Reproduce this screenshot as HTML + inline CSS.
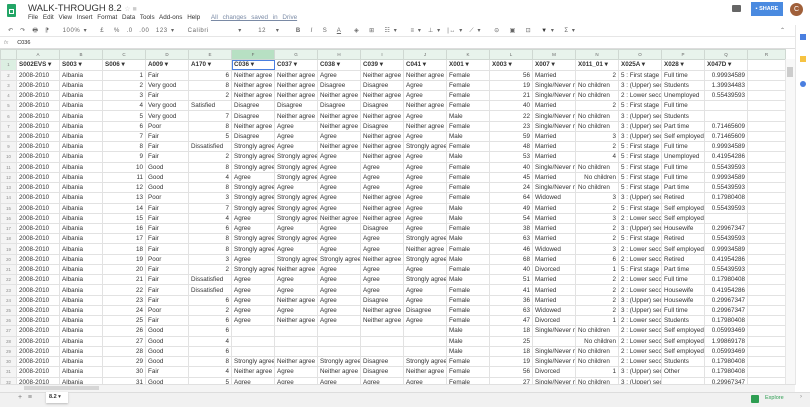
<!DOCTYPE html><html><head><meta charset="utf-8"><style>
*{margin:0;padding:0;box-sizing:border-box}
body{width:810px;height:407px;overflow:hidden;background:#fff;font-family:"Liberation Sans",sans-serif;color:#222;position:relative}
.a{position:absolute}
.t{font-size:9.5px;color:#333;left:28px;top:3px}
.m{font-size:6.3px;color:#333;left:28px;top:14px;word-spacing:3px}
.m span{color:#7a8aa5;text-decoration:underline;margin-left:6px}
.tb{top:25px;left:0;width:795px;height:12px;font-size:6px;color:#666;white-space:pre;padding-left:8px;line-height:12px;border-bottom:1px solid #e6e6e6;letter-spacing:0.6px;word-spacing:1px}
.fb{top:38px;left:0;width:795px;height:11px;font-size:5.5px;line-height:11px;border-bottom:1px solid #ddd}
table{position:absolute;left:0;top:49px;border-collapse:collapse;table-layout:fixed;width:785px}
td{border:1px solid #e2e2e2;font-size:6.3px;height:10.24px;line-height:9px;padding:0 2px;white-space:nowrap;overflow:hidden;color:#333}
td.n{text-align:right}
tr.h td{background:#e8f3ec;text-align:center;font-size:4.5px;color:#666;height:9px;border-color:#cfd8d2}
tr.h td.s{background:#b7e0c3}
td.rh{background:#f4f4f4;text-align:center;font-size:4.3px;color:#888;padding:0}
tr.f td{font-weight:bold;height:10.5px}
tr.f td.rh{background:#dcefe2;font-weight:normal}
.sel{outline:1.5px solid #4a7fe0;outline-offset:-1px}
</style></head><body>
<div class="a" style="left:7px;top:4px;width:9px;height:13px;background:#23a566;border-radius:1px"></div>
<div class="a" style="left:9px;top:9px;width:5px;height:5px;border:1px solid #fff"></div>
<div class="a t">WALK-THROUGH 8.2 <span style="color:#ccc;font-size:7px">☆ ■</span></div>
<div class="a m">File Edit View Insert Format Data Tools Add-ons Help <span>All changes saved in Drive</span></div>
<div class="a" style="left:732px;top:5px;width:9px;height:7px;background:#666;border-radius:1px"></div>
<div class="a" style="left:751px;top:2px;width:32px;height:14px;background:#4a8ae0;color:#fff;font-size:5.5px;line-height:14px;text-align:center;font-weight:bold">▪ SHARE</div>
<div class="a" style="left:790px;top:3px;width:13px;height:13px;border-radius:50%;background:#a0603a;color:#fff;font-size:7px;text-align:center;line-height:13px">C</div>
<div class="a tb">↶  ↷  🖶  ⁋    100% ▾    £   %  .0  .00  123 ▾    Calibri         ▾     12   ▾     <b>B</b>   <i>I</i>   S   <u>A</u>    ◈   ⊞   ☷ ▾    ≡ ▾  ⊥ ▾  |↔ ▾  ⟋ ▾    ⊝   ▣   ⊡   <b style="color:#333">▼</b> ▾   Σ ▾</div>
<div class="a" style="left:780px;top:27px;font-size:6px;color:#666">⌃</div>
<div class="a fb"><span style="color:#aaa;font-style:italic;margin-left:4px">fx</span><span style="margin-left:9px">C036</span></div>
<div class="a" style="left:795px;top:25px;width:15px;height:360px;background:#fff;border-left:1px solid #e6e6e6"></div>
<div class="a" style="left:800px;top:34px;width:6px;height:6px;background:#4a7fe0"></div>
<div class="a" style="left:800px;top:56px;width:6px;height:6px;background:#f6c343"></div>
<div class="a" style="left:800px;top:81px;width:6px;height:6px;background:#4a7fe0;border-radius:50%"></div>
<table>
<colgroup><col style="width:16px"><col span="17" style="width:43px"><col style="width:38px"></colgroup>
<tr class="h"><td class="rh"></td><td>A</td><td>B</td><td>C</td><td>D</td><td>E</td><td class="s">F</td><td>G</td><td>H</td><td>I</td><td>J</td><td>K</td><td>L</td><td>M</td><td>N</td><td>O</td><td>P</td><td>Q</td><td>R</td></tr>
<tr class="f"><td class="rh">1</td><td>S002EVS ▾</td><td>S003 ▾</td><td>S006 ▾</td><td>A009 ▾</td><td>A170 ▾</td><td class="sel">C036 ▾</td><td>C037 ▾</td><td>C038 ▾</td><td>C039 ▾</td><td>C041 ▾</td><td>X001 ▾</td><td>X003 ▾</td><td>X007 ▾</td><td>X011_01 ▾</td><td>X025A ▾</td><td>X028 ▾</td><td>X047D ▾</td><td></td></tr>
<tr><td class="rh">2</td><td>2008-2010</td><td>Albania</td><td class="n">1</td><td>Fair</td><td class="n">6</td><td>Neither agree r</td><td>Neither agree r</td><td>Agree</td><td>Neither agree r</td><td>Neither agree r</td><td>Female</td><td class="n">56</td><td>Married</td><td class="n">2</td><td>5 : First stage o</td><td>Full time</td><td class="n">0.99934589</td><td></td></tr>
<tr><td class="rh">3</td><td>2008-2010</td><td>Albania</td><td class="n">2</td><td>Very good</td><td class="n">8</td><td>Neither agree r</td><td>Neither agree r</td><td>Disagree</td><td>Disagree</td><td>Agree</td><td>Female</td><td class="n">19</td><td>Single/Never m</td><td>No children</td><td>3 : (Upper) secc</td><td>Students</td><td class="n">1.39934483</td><td></td></tr>
<tr><td class="rh">4</td><td>2008-2010</td><td>Albania</td><td class="n">3</td><td>Fair</td><td class="n">2</td><td>Neither agree r</td><td>Neither agree r</td><td>Neither agree r</td><td>Neither agree r</td><td>Agree</td><td>Female</td><td class="n">21</td><td>Single/Never m</td><td>No children</td><td>2 : Lower secon</td><td>Unemployed</td><td class="n">0.55439593</td><td></td></tr>
<tr><td class="rh">5</td><td>2008-2010</td><td>Albania</td><td class="n">4</td><td>Very good</td><td>Satisfied</td><td>Disagree</td><td>Disagree</td><td>Disagree</td><td>Disagree</td><td>Neither agree r</td><td>Female</td><td class="n">40</td><td>Married</td><td class="n">2</td><td>5 : First stage o</td><td>Full time</td><td></td><td></td></tr>
<tr><td class="rh">6</td><td>2008-2010</td><td>Albania</td><td class="n">5</td><td>Very good</td><td class="n">7</td><td>Disagree</td><td>Neither agree r</td><td>Neither agree r</td><td>Neither agree r</td><td>Agree</td><td>Male</td><td class="n">22</td><td>Single/Never m</td><td>No children</td><td>3 : (Upper) secc</td><td>Students</td><td></td><td></td></tr>
<tr><td class="rh">7</td><td>2008-2010</td><td>Albania</td><td class="n">6</td><td>Poor</td><td class="n">8</td><td>Neither agree r</td><td>Agree</td><td>Neither agree r</td><td>Disagree</td><td>Neither agree r</td><td>Female</td><td class="n">23</td><td>Single/Never m</td><td>No children</td><td>3 : (Upper) secc</td><td>Part time</td><td class="n">0.71465609</td><td></td></tr>
<tr><td class="rh">8</td><td>2008-2010</td><td>Albania</td><td class="n">7</td><td>Fair</td><td class="n">5</td><td>Disagree</td><td>Agree</td><td>Agree</td><td>Neither agree r</td><td>Agree</td><td>Male</td><td class="n">59</td><td>Married</td><td class="n">3</td><td>3 : (Upper) secc</td><td>Self employed</td><td class="n">0.71465609</td><td></td></tr>
<tr><td class="rh">9</td><td>2008-2010</td><td>Albania</td><td class="n">8</td><td>Fair</td><td>Dissatisfied</td><td>Strongly agree</td><td>Agree</td><td>Neither agree r</td><td>Neither agree r</td><td>Strongly agree</td><td>Female</td><td class="n">48</td><td>Married</td><td class="n">2</td><td>5 : First stage o</td><td>Full time</td><td class="n">0.99934589</td><td></td></tr>
<tr><td class="rh">10</td><td>2008-2010</td><td>Albania</td><td class="n">9</td><td>Fair</td><td class="n">2</td><td>Strongly agree</td><td>Strongly agree</td><td>Agree</td><td>Neither agree r</td><td>Agree</td><td>Male</td><td class="n">53</td><td>Married</td><td class="n">4</td><td>5 : First stage o</td><td>Unemployed</td><td class="n">0.41954286</td><td></td></tr>
<tr><td class="rh">11</td><td>2008-2010</td><td>Albania</td><td class="n">10</td><td>Good</td><td class="n">8</td><td>Strongly agree</td><td>Strongly agree</td><td>Agree</td><td>Agree</td><td>Agree</td><td>Female</td><td class="n">40</td><td>Single/Never m</td><td>No children</td><td>5 : First stage o</td><td>Full time</td><td class="n">0.55439593</td><td></td></tr>
<tr><td class="rh">12</td><td>2008-2010</td><td>Albania</td><td class="n">11</td><td>Good</td><td class="n">4</td><td>Agree</td><td>Strongly agree</td><td>Agree</td><td>Agree</td><td>Agree</td><td>Female</td><td class="n">45</td><td>Married</td><td class="n">No children</td><td>5 : First stage o</td><td>Full time</td><td class="n">0.99934589</td><td></td></tr>
<tr><td class="rh">13</td><td>2008-2010</td><td>Albania</td><td class="n">12</td><td>Good</td><td class="n">8</td><td>Strongly agree</td><td>Agree</td><td>Agree</td><td>Agree</td><td>Agree</td><td>Female</td><td class="n">24</td><td>Single/Never m</td><td>No children</td><td>5 : First stage o</td><td>Part time</td><td class="n">0.55439593</td><td></td></tr>
<tr><td class="rh">14</td><td>2008-2010</td><td>Albania</td><td class="n">13</td><td>Poor</td><td class="n">3</td><td>Strongly agree</td><td>Strongly agree</td><td>Agree</td><td>Neither agree r</td><td>Agree</td><td>Female</td><td class="n">64</td><td>Widowed</td><td class="n">3</td><td>3 : (Upper) secc</td><td>Retired</td><td class="n">0.17980408</td><td></td></tr>
<tr><td class="rh">15</td><td>2008-2010</td><td>Albania</td><td class="n">14</td><td>Fair</td><td class="n">7</td><td>Strongly agree</td><td>Strongly agree</td><td>Agree</td><td>Neither agree r</td><td>Agree</td><td>Male</td><td class="n">49</td><td>Married</td><td class="n">2</td><td>5 : First stage o</td><td>Self employed</td><td class="n">0.55439593</td><td></td></tr>
<tr><td class="rh">16</td><td>2008-2010</td><td>Albania</td><td class="n">15</td><td>Fair</td><td class="n">4</td><td>Agree</td><td>Strongly agree</td><td>Neither agree r</td><td>Neither agree r</td><td>Agree</td><td>Male</td><td class="n">54</td><td>Married</td><td class="n">3</td><td>2 : Lower secon</td><td>Self employed</td><td></td><td></td></tr>
<tr><td class="rh">17</td><td>2008-2010</td><td>Albania</td><td class="n">16</td><td>Fair</td><td class="n">6</td><td>Agree</td><td>Agree</td><td>Agree</td><td>Disagree</td><td>Agree</td><td>Female</td><td class="n">38</td><td>Married</td><td class="n">2</td><td>3 : (Upper) secc</td><td>Housewife</td><td class="n">0.29967347</td><td></td></tr>
<tr><td class="rh">18</td><td>2008-2010</td><td>Albania</td><td class="n">17</td><td>Fair</td><td class="n">8</td><td>Strongly agree</td><td>Strongly agree</td><td>Agree</td><td>Agree</td><td>Strongly agree</td><td>Male</td><td class="n">63</td><td>Married</td><td class="n">2</td><td>5 : First stage o</td><td>Retired</td><td class="n">0.55439593</td><td></td></tr>
<tr><td class="rh">19</td><td>2008-2010</td><td>Albania</td><td class="n">18</td><td>Fair</td><td class="n">8</td><td>Strongly agree</td><td>Agree</td><td>Agree</td><td>Agree</td><td>Neither agree r</td><td>Female</td><td class="n">46</td><td>Widowed</td><td class="n">3</td><td>2 : Lower secon</td><td>Self employed</td><td class="n">0.99934589</td><td></td></tr>
<tr><td class="rh">20</td><td>2008-2010</td><td>Albania</td><td class="n">19</td><td>Poor</td><td class="n">3</td><td>Agree</td><td>Strongly agree</td><td>Strongly agree</td><td>Neither agree r</td><td>Strongly agree</td><td>Male</td><td class="n">68</td><td>Married</td><td class="n">6</td><td>2 : Lower secon</td><td>Retired</td><td class="n">0.41954286</td><td></td></tr>
<tr><td class="rh">21</td><td>2008-2010</td><td>Albania</td><td class="n">20</td><td>Fair</td><td class="n">2</td><td>Strongly agree</td><td>Neither agree r</td><td>Agree</td><td>Agree</td><td>Agree</td><td>Female</td><td class="n">40</td><td>Divorced</td><td class="n">1</td><td>5 : First stage o</td><td>Part time</td><td class="n">0.55439593</td><td></td></tr>
<tr><td class="rh">22</td><td>2008-2010</td><td>Albania</td><td class="n">21</td><td>Fair</td><td>Dissatisfied</td><td>Agree</td><td>Agree</td><td>Agree</td><td>Agree</td><td>Strongly agree</td><td>Male</td><td class="n">51</td><td>Married</td><td class="n">2</td><td>2 : Lower secon</td><td>Full time</td><td class="n">0.17980408</td><td></td></tr>
<tr><td class="rh">23</td><td>2008-2010</td><td>Albania</td><td class="n">22</td><td>Fair</td><td>Dissatisfied</td><td>Agree</td><td>Agree</td><td>Agree</td><td>Agree</td><td>Agree</td><td>Female</td><td class="n">41</td><td>Married</td><td class="n">2</td><td>2 : Lower secon</td><td>Housewife</td><td class="n">0.41954286</td><td></td></tr>
<tr><td class="rh">24</td><td>2008-2010</td><td>Albania</td><td class="n">23</td><td>Fair</td><td class="n">6</td><td>Agree</td><td>Neither agree r</td><td>Agree</td><td>Disagree</td><td>Agree</td><td>Female</td><td class="n">36</td><td>Married</td><td class="n">2</td><td>3 : (Upper) secc</td><td>Housewife</td><td class="n">0.29967347</td><td></td></tr>
<tr><td class="rh">25</td><td>2008-2010</td><td>Albania</td><td class="n">24</td><td>Poor</td><td class="n">2</td><td>Agree</td><td>Agree</td><td>Agree</td><td>Neither agree r</td><td>Disagree</td><td>Female</td><td class="n">63</td><td>Widowed</td><td class="n">2</td><td>3 : (Upper) secc</td><td>Full time</td><td class="n">0.29967347</td><td></td></tr>
<tr><td class="rh">26</td><td>2008-2010</td><td>Albania</td><td class="n">25</td><td>Fair</td><td class="n">6</td><td>Agree</td><td>Neither agree r</td><td>Agree</td><td>Neither agree r</td><td>Agree</td><td>Female</td><td class="n">47</td><td>Divorced</td><td class="n">1</td><td>2 : Lower secon</td><td>Students</td><td class="n">0.17980408</td><td></td></tr>
<tr><td class="rh">27</td><td>2008-2010</td><td>Albania</td><td class="n">26</td><td>Good</td><td class="n">6</td><td></td><td></td><td></td><td></td><td></td><td>Male</td><td class="n">18</td><td>Single/Never m</td><td>No children</td><td>2 : Lower secon</td><td>Self employed</td><td class="n">0.05993469</td><td></td></tr>
<tr><td class="rh">28</td><td>2008-2010</td><td>Albania</td><td class="n">27</td><td>Good</td><td class="n">4</td><td></td><td></td><td></td><td></td><td></td><td>Male</td><td class="n">25</td><td></td><td class="n">No children</td><td>2 : Lower secon</td><td>Self employed</td><td class="n">1.99869178</td><td></td></tr>
<tr><td class="rh">29</td><td>2008-2010</td><td>Albania</td><td class="n">28</td><td>Good</td><td class="n">6</td><td></td><td></td><td></td><td></td><td></td><td>Male</td><td class="n">18</td><td>Single/Never m</td><td>No children</td><td>2 : Lower secon</td><td>Self employed</td><td class="n">0.05993469</td><td></td></tr>
<tr><td class="rh">30</td><td>2008-2010</td><td>Albania</td><td class="n">29</td><td>Good</td><td class="n">8</td><td>Strongly agree</td><td>Neither agree r</td><td>Strongly agree</td><td>Disagree</td><td>Strongly agree</td><td>Female</td><td class="n">19</td><td>Single/Never m</td><td>No children</td><td>2 : Lower secon</td><td>Students</td><td class="n">0.17980408</td><td></td></tr>
<tr><td class="rh">31</td><td>2008-2010</td><td>Albania</td><td class="n">30</td><td>Fair</td><td class="n">4</td><td>Neither agree r</td><td>Agree</td><td>Neither agree r</td><td>Disagree</td><td>Neither agree r</td><td>Female</td><td class="n">56</td><td>Divorced</td><td class="n">1</td><td>3 : (Upper) secc</td><td>Other</td><td class="n">0.17980408</td><td></td></tr>
<tr><td class="rh">32</td><td>2008-2010</td><td>Albania</td><td class="n">31</td><td>Good</td><td class="n">5</td><td>Agree</td><td>Agree</td><td>Agree</td><td>Agree</td><td>Agree</td><td>Female</td><td class="n">27</td><td>Single/Never m</td><td>No children</td><td>3 : (Upper) secondary educatio</td><td></td><td class="n">0.29967347</td><td></td></tr>
</table>
<div class="a" style="left:785px;top:59px;width:10px;height:326px;background:#f8f8f8;border-left:1px solid #e6e6e6"></div>
<div class="a" style="left:787px;top:67px;width:6px;height:10px;background:#ccc"></div>
<div class="a" style="left:0;top:384px;width:795px;height:8px;background:#f4f4f4;border-top:1px solid #e0e0e0"></div>
<div class="a" style="left:24px;top:386px;width:75px;height:4px;background:#d6d6d6"></div>
<div class="a" style="left:0;top:392px;width:810px;height:15px;background:#f1f1f1;border-top:1px solid #ddd"></div>
<div class="a" style="left:18px;top:394px;font-size:7px;color:#777">+ &nbsp; ≡</div>
<div class="a" style="left:46px;top:392px;width:22px;height:11px;background:#fff;font-size:5.5px;line-height:10px;padding-left:3px;color:#333;box-shadow:0 1px 2px #bbb"><b>8.2</b> ▾</div>
<div class="a" style="left:751px;top:395px;width:8px;height:8px;background:#2e9e52;border-radius:1px"></div>
<div class="a" style="left:765px;top:395px;font-size:5.5px;color:#2e9e52">Explore</div>
<div class="a" style="left:800px;top:394px;font-size:6px;color:#888">›</div>
</body></html>
